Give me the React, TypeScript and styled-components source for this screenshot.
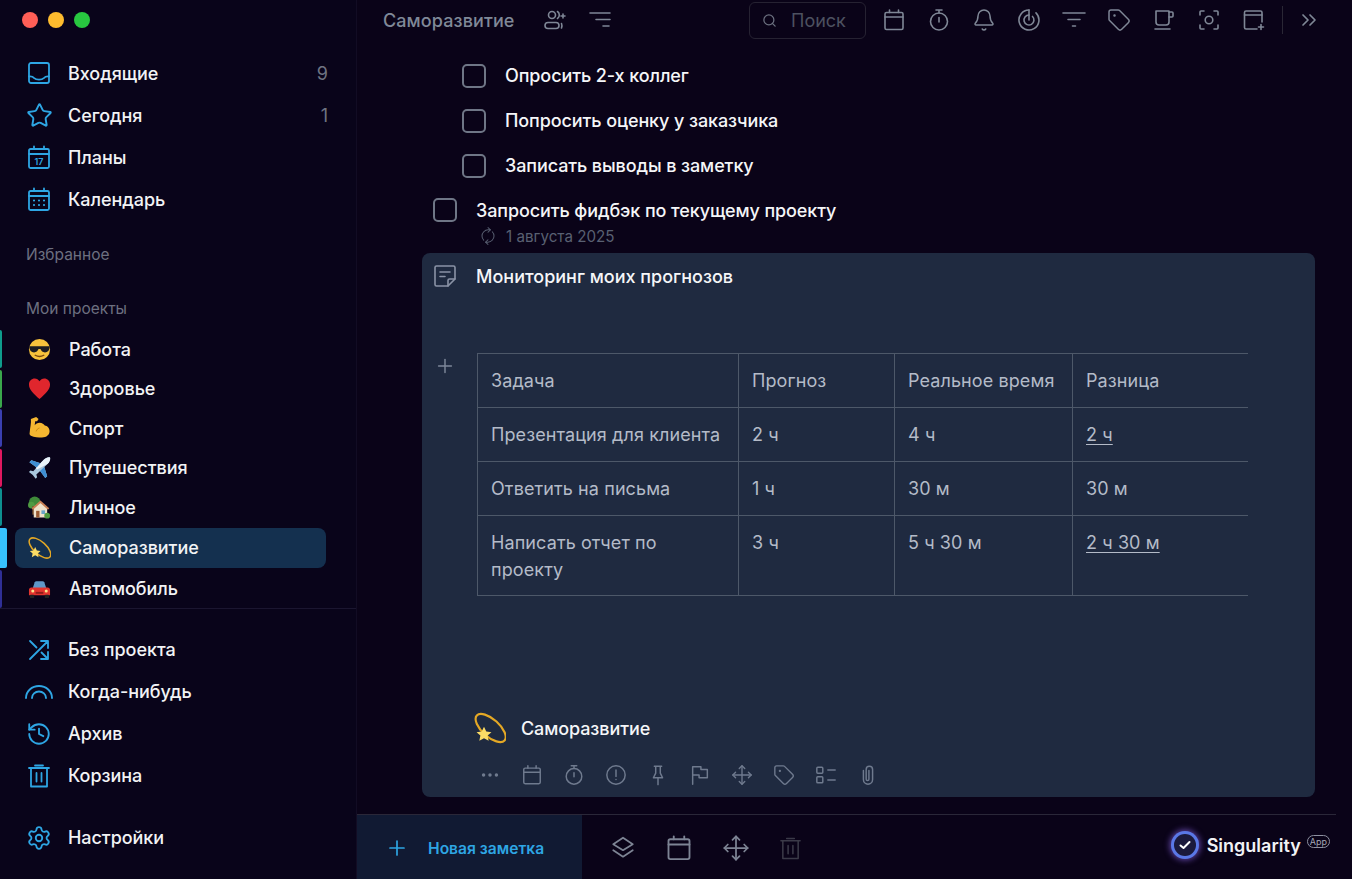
import React from 'react';
import styled, { createGlobalStyle } from 'styled-components';
import {
  Bell,
  ChevronsRight,
  Ellipsis,
  History,
  Move,
  Plus,
  RefreshCw,
  Search,
  Settings,
  Star,
  Tag,
} from 'lucide-react';

const GlobalStyle = createGlobalStyle`
  html, body {
    margin: 0;
    padding: 0;
    height: 100%;
    background: #0a0318;
    font-family: Inter, "Noto Sans", sans-serif;
    overflow: hidden;
  }
  * { box-sizing: border-box; }
`;

type IconProps = { size?: number; stroke?: number };

const Outline = ({ size = 24, stroke = 1.6, children }: IconProps & { children: React.ReactNode }) => (
  <svg width={size} height={size} viewBox='0 0 24 24' fill='none' stroke='currentColor' strokeWidth={stroke} strokeLinecap='round' strokeLinejoin='round'>
    {children}
  </svg>
);

const InboxIcon = (props: IconProps) => (
  <Outline {...props}>
    <rect x='2' y='2' width='20' height='20' rx='2' />
    <path d='M2 15.5c3-.3 4 .3 5.2 1.6 1.2 1.2 2.8 1.5 4.8 1.5s3.6-.3 4.8-1.5c1.2-1.3 2.2-1.9 5.2-1.6' />
  </Outline>
);

const Calendar17Icon = (props: IconProps) => (
  <Outline {...props}>
    <rect x='2' y='4' width='20' height='19' rx='1.5' />
    <path d='M2 9h20M7 1.5V4M17 1.5V4' />
    <text x='12' y='20' textAnchor='middle' fontSize='9' fontWeight='600' fill='currentColor' stroke='none' fontFamily='Inter, sans-serif'>17</text>
  </Outline>
);

const CalendarIcon = (props: IconProps) => (
  <Outline {...props}>
    <rect x='3' y='4.5' width='18' height='17' rx='1.5' />
    <path d='M3 9h18M7.5 2v2.5M16.5 2v2.5' />
  </Outline>
);

const CalendarDotsIcon = (props: IconProps) => (
  <Outline {...props}>
    <rect x='2' y='4' width='20' height='19' rx='1.5' />
    <path d='M2 9h20M7 1.5V4M17 1.5V4' />
    <path d='M7 13.5h.01M12 13.5h.01M17 13.5h.01M7 18h.01M12 18h.01M17 18h.01' strokeWidth={2.2} />
  </Outline>
);

const ShuffleIcon = (props: IconProps) => (
  <Outline {...props}>
    <path d='M3 21 21 3M14 3h7v7M3 3l6.5 6.5M14.5 14.5 21 21M21 14v7h-7' />
  </Outline>
);

const ArcsIcon = () => (
  <svg width='28' height='14' viewBox='0 0 28 14' fill='none' stroke='currentColor' strokeWidth={1.9} strokeLinecap='round'>
    <path d='M1 13a13 12 0 0 1 26 0M7 13a7 6.5 0 0 1 14 0' />
  </svg>
);

const PeopleAddIcon = (props: IconProps) => (
  <Outline {...props}>
    <circle cx='9' cy='7' r='3.5' />
    <rect x='2' y='14.5' width='14' height='6' rx='3' />
    <path d='M14.5 3.5c1.3.8 1.8 2 1.8 3.5s-.5 2.700-1.800 3.500M18.500 15.500c.5 1.200.5 3 0 4.500M20 6v4M18 8h4' />
  </Outline>
);

const SortLinesIcon = (props: IconProps) => (
  <Outline {...props}>
    <path d='M2 5h20M8 11.5h14M15 18h6' />
  </Outline>
);

const TimerIcon = (props: IconProps) => (
  <Outline {...props}>
    <circle cx='12' cy='13.5' r='8.5' />
    <path d='M9 2h6M12 2v3M12 9.5v4.5' />
  </Outline>
);

const RadarIcon = (props: IconProps) => (
  <Outline {...props}>
    <path d='M12 2a10 10 0 1 0 7 2.9' />
    <path d='M12 7a5 5 0 1 0 3.5 1.46' />
    <path d='M12 2v10' />
  </Outline>
);

const FunnelLinesIcon = (props: IconProps) => (
  <Outline {...props}>
    <path d='M1 5h22M6 11.5h12M10.5 18h3' />
  </Outline>
);

const MugIcon = (props: IconProps) => (
  <Outline {...props}>
    <path d='M4 3h13v11a3 3 0 0 1-3 3H7a3 3 0 0 1-3-3z' />
    <path d='M17 4h3a1 1 0 0 1 1 1v3a1 1 0 0 1-1 1h-3M3 21h15' />
  </Outline>
);

const ScanIcon = (props: IconProps) => (
  <Outline {...props}>
    <path d='M3 7V4a1 1 0 0 1 1-1h3M17 3h3a1 1 0 0 1 1 1v3M21 17v3a1 1 0 0 1-1 1h-3M7 21H4a1 1 0 0 1-1-1v-3' />
    <circle cx='12' cy='12' r='3.8' />
  </Outline>
);

const WindowAddIcon = (props: IconProps) => (
  <Outline {...props}>
    <path d='M15 21H4a1.5 1.5 0 0 1-1.5-1.5v-15A1.5 1.5 0 0 1 4 3h14.5A1.5 1.5 0 0 1 20 4.5V14' />
    <path d='M2.5 7H20M19 16.5v5M16.5 19h5' />
  </Outline>
);

const NoteIcon = (props: IconProps) => (
  <Outline {...props}>
    <path d='M15 22H3.5A1.5 1.5 0 0 1 2 20.5v-17A1.5 1.5 0 0 1 3.5 2h17A1.5 1.5 0 0 1 22 3.5V15z' />
    <path d='M22 15h-5.5a1.5 1.5 0 0 0-1.5 1.5V22M7 8h10M7 12.5h5' />
  </Outline>
);

const AlertIcon = (props: IconProps) => (
  <Outline {...props}>
    <circle cx='12' cy='12' r='10' />
    <path d='M12 6.5v7M12 17h.01' />
  </Outline>
);

const PinIcon = (props: IconProps) => (
  <Outline {...props}>
    <path d='M8 2.5h8M9.5 2.5V10L7 15h10l-2.5-5V2.5M12 15v7.5' />
  </Outline>
);

const ChecklistIcon = (props: IconProps) => (
  <Outline {...props}>
    <rect x='2' y='3.5' width='6.5' height='6.5' rx='1' />
    <rect x='2' y='14' width='6.5' height='6.5' rx='1' />
    <path d='M14 6.5h8M14 17.5h8' />
  </Outline>
);

const ClipIcon = (props: IconProps) => (
  <Outline {...props}>
    <path d='M7 7v10a5 5 0 0 0 10 0V6a3.5 3.5 0 0 0-7 0v10.500a1.500 1.500 0 0 0 3 0V7' />
  </Outline>
);

const FlagIcon = (props: IconProps) => (
  <Outline {...props}>
    <path d='M4 22V3h9v3h7v9h-9v-3H4' />
  </Outline>
);

const LayersIcon = (props: IconProps) => (
  <Outline {...props}>
    <path d='M12 2.5 21 8.5 12 14 3 8.5z' />
    <path d='M3 14l9 6 9-6' />
  </Outline>
);

const TrashSquareIcon = (props: IconProps) => (
  <Outline {...props}>
    <path d='M2 4h20M8 1.5h8M4 4v18.5h16V4M9.5 9v8.5M14.5 9v8.5' />
  </Outline>
);

const CoolEmoji = ({ size }: IconProps) => (
  <svg width={size} height={size} viewBox='0 0 24 24'>
    <circle cx='12' cy='12' r='11' fill='#f7c23c' />
    <path d='M1.5 8.5h21V10c0 3-2 5-4.800 5-2.400 0-3.900-1.500-4.700-3.500h-2c-.8 2-2.300 3.500-4.700 3.500C3.500 15 1.500 13 1.500 10z' fill='#1d1d22' />
    <path d='M7.5 18c2.800 1.600 6.200 1.600 9 0' stroke='#7a4a12' strokeWidth='1.4' fill='none' strokeLinecap='round' />
  </svg>
);

const HeartEmoji = ({ size }: IconProps) => (
  <svg width={size} height={size} viewBox='0 0 24 24'>
    <path d='M12 23C6 17.500 1 13.500 1 7.800 1 4 3.800 1.500 7 1.500c2.200 0 3.900 1.100 5 3 1.100-1.900 2.800-3 5-3 3.200 0 6 2.500 6 6.300C23 13.500 18 17.500 12 23z' fill='#e0262d' />
  </svg>
);

const ArmEmoji = ({ size }: IconProps) => (
  <svg width={size} height={size} viewBox='0 0 24 24'>
    <path d='M3 2.5 8.5 0.5l2.500 2-1.500 2.500L7.500 5l-.5 4c1-1.500 3-2.500 5-2.500 3 0 4.500 1.500 5.500 3 2.500.3 5 2.300 5 6 0 3.500-3 6.500-8 6.500-3.500 0-8-.5-11.500-2-1.500-.7-1.500-2-1.200-3.500C2 12 3.500 7 3 2.500z' fill='#f5b731' />
    <path d='M12 12c-2 .5-3 2-3.500 3.500' stroke='#c98510' strokeWidth='1' fill='none' />
  </svg>
);

const PlaneEmoji = ({ size }: IconProps) => (
  <svg width={size} height={size} viewBox='0 0 24 24'>
    <path d='M23 1c-2-.6-4.500.4-6.500 2.400L13 7 3.500 4 1.500 6l7.500 5.500-3.500 4-3-.8-1.500 1.500 4 3 3 4 1.500-1.500-.8-3 4-3.500L18 22.500l2-2-3-9.500 3.600-3.500C22.600 5.500 23.600 3 23 1z' fill='#a9c7dd' />
    <path d='M23 1c-2-.6-4.500.4-6.500 2.400L8 12l1.500 1.500L20.600 7.500C22.600 5.500 23.600 3 23 1z' fill='#eaf3f9' />
    <path d='M13 7 3.500 4 1.500 6 9 11.500zM17 11l3 9.500-2 2-5.500-7.500z' fill='#3f8fd2' />
  </svg>
);

const HouseEmoji = ({ size }: IconProps) => (
  <svg width={size} height={size} viewBox='0 0 24 24'>
    <circle cx='7' cy='7' r='6' fill='#3f8a3a' />
    <circle cx='3.5' cy='10' r='3.5' fill='#4f9b42' />
    <rect x='4.5' y='11' width='2' height='9' fill='#7a4f2a' />
    <path d='M6 23V13l7-6 7 6v10z' fill='#efe2cb' />
    <path d='M4.5 14 13 6.5l8.500 7.500' stroke='#c98055' strokeWidth='2' fill='none' />
    <rect x='8.5' y='16' width='3.5' height='7' fill='#9a5a32' />
    <rect x='14' y='15.5' width='3.8' height='3.8' fill='#6aa6c9' />
    <circle cx='20' cy='21' r='3' fill='#4f9b42' />
  </svg>
);

const DizzyEmoji = ({ size }: IconProps) => (
  <svg width={size} height={size} viewBox='0 0 24 24'>
    <ellipse cx='12.5' cy='12' rx='14' ry='6.5' transform='rotate(42 12.5 12)' fill='none' stroke='#e4a825' strokeWidth='1.6' />
    <path d='M7.5 11l1.700 3.600 3.900.5-2.900 2.600.8 3.900-3.500-2-3.500 2 .8-3.900-2.900-2.600 3.900-.5z' fill='#fbdc66' />
  </svg>
);

const CarEmoji = ({ size }: IconProps) => (
  <svg width={size} height={size} viewBox='0 0 24 24'>
    <path d='M5 11l2-6c.3-.8 1-1.200 1.800-1.200h6.400c.8 0 1.500.4 1.800 1.200l2 6z' fill='#5f98c8' />
    <path d='M1 13c0-1.500 1-2.500 2.500-2.500h17c1.500 0 2.500 1 2.500 2.500v5.500H1z' fill='#e2342e' />
    <rect x='2' y='18' width='4.5' height='3.5' rx='1' fill='#222' />
    <rect x='17.5' y='18' width='4.5' height='3.5' rx='1' fill='#222' />
    <circle cx='5' cy='14' r='1.6' fill='#fbe38a' />
    <circle cx='19' cy='14' r='1.6' fill='#fbe38a' />
    <rect x='8' y='15' width='8' height='2' fill='#8f1d1a' />
  </svg>
);

const primaryNav = [
  { label: 'Входящие', icon: <InboxIcon size={24} stroke={1.8} />, count: '9' },
  { label: 'Сегодня', icon: <Star size={27} strokeWidth={1.7} />, count: '1' },
  { label: 'Планы', icon: <Calendar17Icon size={24} stroke={1.8} /> },
  { label: 'Календарь', icon: <CalendarDotsIcon size={24} stroke={1.8} /> },
];

const projects = [
  { label: 'Работа', emoji: <CoolEmoji size={23} />, color: '#0f9c8c' },
  { label: 'Здоровье', emoji: <HeartEmoji size={23} />, color: '#3aa84c' },
  { label: 'Спорт', emoji: <ArmEmoji size={24} />, color: '#3a3fb0' },
  { label: 'Путешествия', emoji: <PlaneEmoji size={24} />, color: '#e0185f' },
  { label: 'Личное', emoji: <HouseEmoji size={24} />, color: '#0e8f8f' },
  { label: 'Саморазвитие', emoji: <DizzyEmoji size={24} />, color: '#37c2ff', active: true },
  { label: 'Автомобиль', emoji: <CarEmoji size={24} />, color: '#2f2f95' },
];

const secondaryNav = [
  { label: 'Без проекта', icon: <ShuffleIcon size={24} stroke={1.8} /> },
  { label: 'Когда-нибудь', icon: <ArcsIcon /> },
  { label: 'Архив', icon: <History size={26} strokeWidth={1.7} /> },
  { label: 'Корзина', icon: <TrashSquareIcon size={24} stroke={1.8} /> },
];

const headerTools = [
  <CalendarIcon key='calendar' />,
  <TimerIcon key='timer' />,
  <Bell key='bell' size={24} strokeWidth={1.5} />,
  <RadarIcon key='radar' />,
  <FunnelLinesIcon key='funnel' />,
  <Tag key='tag' size={24} strokeWidth={1.5} />,
  <MugIcon key='mug' />,
  <ScanIcon key='scan' />,
  <WindowAddIcon key='window' />,
];

const subTasks = ['Опросить 2-х коллег', 'Попросить оценку у заказчика', 'Записать выводы в заметку'];

const tableRows = [
  ['Задача', 'Прогноз', 'Реальное время', 'Разница'],
  ['Презентация для клиента', '2 ч', '4 ч', '2 ч'],
  ['Ответить на письма', '1 ч', '30 м', '30 м'],
  ['Написать отчет по проекту', '3 ч', '5 ч 30 м', '2 ч 30 м'],
];

const underlined = ['2 ч', '2 ч 30 м'];

const cardTools = [
  <Ellipsis key='more' size={22} strokeWidth={1.8} />,
  <CalendarIcon key='calendar' size={22} />,
  <TimerIcon key='timer' size={22} />,
  <AlertIcon key='alert' size={22} />,
  <PinIcon key='pin' size={22} />,
  <FlagIcon key='flag' size={22} />,
  <Move key='move' size={22} strokeWidth={1.5} />,
  <Tag key='tag' size={22} strokeWidth={1.5} />,
  <ChecklistIcon key='checklist' size={22} />,
  <ClipIcon key='clip' size={22} />,
];

const App = () => (
  <Page>
    <GlobalStyle />
    <Sidebar>
      <TrafficLights>
        <Light $color='#ff5f57' />
        <Light $color='#febc2e' />
        <Light $color='#28c840' />
      </TrafficLights>

      <NavList $top={24}>
        {primaryNav.map((item) => (
          <NavRow key={item.label}>
            <NavIcon>{item.icon}</NavIcon>
            <NavLabel>{item.label}</NavLabel>
            {item.count && <Count>{item.count}</Count>}
          </NavRow>
        ))}
      </NavList>

      <SectionLabel $top={25}>Избранное</SectionLabel>
      <SectionLabel $top={34}>Мои проекты</SectionLabel>

      <ProjectList>
        {projects.map((project) => (
          <ProjectRow key={project.label} $active={project.active}>
            <Strip $color={project.color} $active={project.active} />
            <ProjectPill $active={project.active}>
              <EmojiSlot>{project.emoji}</EmojiSlot>
              <NavLabel>{project.label}</NavLabel>
            </ProjectPill>
          </ProjectRow>
        ))}
      </ProjectList>

      <SidebarDivider />

      <NavList $top={20}>
        {secondaryNav.map((item) => (
          <NavRow key={item.label}>
            <NavIcon>{item.icon}</NavIcon>
            <NavLabel>{item.label}</NavLabel>
          </NavRow>
        ))}
      </NavList>

      <NavList $top={20}>
        <NavRow>
          <NavIcon>
            <Settings size={26} strokeWidth={1.7} />
          </NavIcon>
          <NavLabel>Настройки</NavLabel>
        </NavRow>
      </NavList>
    </Sidebar>

    <Main>
      <Header>
        <HeaderTitle>Саморазвитие</HeaderTitle>
        <HeaderIcons>
          <PeopleAddIcon />
          <SortLinesIcon />
        </HeaderIcons>
        <SearchBox>
          <Search size={15} strokeWidth={2} />
          <SearchText>Поиск</SearchText>
        </SearchBox>
        <ToolGroup>{headerTools}</ToolGroup>
        <HeaderDivider />
        <Collapse>
          <ChevronsRight size={24} strokeWidth={1.7} />
        </Collapse>
      </Header>

      <Content>
        {subTasks.map((task) => (
          <SubTaskRow key={task}>
            <Checkbox />
            <TaskTitle>{task}</TaskTitle>
          </SubTaskRow>
        ))}

        <TaskBlock>
          <TaskHead>
            <Checkbox />
            <TaskTitle>Запросить фидбэк по текущему проекту</TaskTitle>
          </TaskHead>
          <TaskDate>
            <RepeatGlyph>
              <RefreshCw size={16} strokeWidth={1.5} />
            </RepeatGlyph>
            <span>1 августа 2025</span>
          </TaskDate>
        </TaskBlock>

        <NoteCard>
          <NoteHead>
            <NoteIconSlot>
              <NoteIcon size={24} />
            </NoteIconSlot>
            <NoteTitle>Мониторинг моих прогнозов</NoteTitle>
          </NoteHead>

          <TableArea>
            <PlusHandle>
              <Plus size={22} strokeWidth={1.6} />
            </PlusHandle>
            <NoteTable>
              <colgroup>
                <col width={261} />
                <col width={156} />
                <col width={178} />
                <col width={175} />
              </colgroup>
              <tbody>
                {tableRows.map((row, rowIndex) => (
                  <tr key={row[0]}>
                    {row.map((cell, cellIndex) => (
                      <Cell key={cellIndex}>
                        {rowIndex > 0 && cellIndex === 3 && underlined.includes(cell) ? <CellLink>{cell}</CellLink> : cell}
                      </Cell>
                    ))}
                  </tr>
                ))}
              </tbody>
            </NoteTable>
          </TableArea>

          <NoteProject>
            <DizzyEmoji size={32} />
            <TaskTitle>Саморазвитие</TaskTitle>
          </NoteProject>

          <CardTools>{cardTools}</CardTools>
        </NoteCard>
      </Content>

      <BottomDivider />

      <BottomBar>
        <NewNote>
          <Plus size={24} strokeWidth={1.7} />
          <NewNoteLabel>Новая заметка</NewNoteLabel>
        </NewNote>
        <BottomTools>
          <LayersIcon size={26} />
          <CalendarIcon size={28} />
          <Move size={28} strokeWidth={1.5} />
          <DimIcon>
            <TrashSquareIcon size={23} />
          </DimIcon>
        </BottomTools>
        <Brand>
          <BrandMark>
            <svg width='12' height='10' viewBox='0 0 12 10' fill='none' stroke='#ffffff' strokeWidth='2' strokeLinecap='round' strokeLinejoin='round'>
              <path d='M1.5 5.5 4.5 8l6-6' />
            </svg>
          </BrandMark>
          <BrandName>Singularity</BrandName>
          <BrandTag>App</BrandTag>
        </Brand>
      </BottomBar>
    </Main>
  </Page>
);

export default App;

const Page = styled.div`
  display: grid;
  grid-template-columns: 357px 1fr;
  width: 1352px;
  height: 879px;
  background: #0a0318;
  color: #ffffff;
  overflow: hidden;
`;

const Sidebar = styled.aside`
  display: flex;
  flex-direction: column;
  background: #09041a;
  border-right: 1px solid #120c24;
`;

const TrafficLights = styled.div`
  display: flex;
  gap: 10px;
  padding: 12px 0 0 22px;
`;

const Light = styled.span<{ $color: string }>`
  width: 16px;
  height: 16px;
  border-radius: 50%;
  background: ${({ $color }) => $color};
`;

const NavList = styled.div<{ $top: number }>`
  display: flex;
  flex-direction: column;
  margin-top: ${({ $top }) => $top}px;
`;

const NavRow = styled.div`
  display: flex;
  align-items: center;
  height: 42px;
  padding-right: 28px;
`;

const NavIcon = styled.span`
  display: flex;
  justify-content: center;
  width: 46px;
  margin: 0 6px 0 16px;
  color: #2ea6e4;
`;

const NavLabel = styled.span`
  font-size: 18px;
  font-weight: 500;
  color: #f2f3f5;
  letter-spacing: -0.05px;
`;

const Count = styled.span`
  margin-left: auto;
  font-size: 18px;
  color: #6f7482;
`;

const SectionLabel = styled.div<{ $top: number }>`
  margin-top: ${({ $top }) => $top}px;
  padding-left: 26px;
  font-size: 15.5px;
  line-height: 20px;
  color: #6d7080;
`;

const ProjectList = styled.div`
  display: flex;
  flex-direction: column;
  gap: 1.6px;
  margin-top: 11px;
`;

const ProjectRow = styled.div<{ $active?: boolean }>`
  display: flex;
  height: ${({ $active }) => ($active ? 40 : 38)}px;
`;

const Strip = styled.span<{ $color: string; $active?: boolean }>`
  flex: 0 0 ${({ $active }) => ($active ? 7 : 2)}px;
  background: ${({ $color }) => $color};
  border-radius: 0 2px 2px 0;
`;

const ProjectPill = styled.div<{ $active?: boolean }>`
  display: flex;
  align-items: center;
  width: 311px;
  margin-left: ${({ $active }) => ($active ? 8 : 13)}px;
  padding-left: 13px;
  border-radius: 8px;
  background: ${({ $active }) => ($active ? '#14304f' : 'transparent')};
`;

const EmojiSlot = styled.span`
  display: flex;
  justify-content: center;
  width: 23px;
  margin-right: 18px;
`;

const SidebarDivider = styled.div`
  height: 1px;
  background: #1b1630;
`;

const Main = styled.main`
  display: flex;
  flex-direction: column;
  min-width: 0;
`;

const Header = styled.header`
  display: flex;
  flex: 0 0 40px;
  align-items: center;
  padding: 0 31px 0 26px;
  color: #7f8796;
`;

const HeaderTitle = styled.span`
  font-size: 18px;
  font-weight: 500;
  color: #808998;
  letter-spacing: 0.1px;
`;

const HeaderIcons = styled.div`
  display: flex;
  gap: 21px;
  margin-left: 28px;
`;

const SearchBox = styled.div`
  display: flex;
  align-items: center;
  gap: 14px;
  width: 117px;
  height: 37px;
  margin-left: auto;
  padding-left: 12px;
  border: 1px solid #262232;
  border-radius: 6px;
  color: #6c7180;
`;

const SearchText = styled.span`
  font-size: 18px;
  color: #4d5160;
`;

const ToolGroup = styled.div`
  display: flex;
  align-items: center;
  gap: 21px;
  margin-left: 16px;
`;

const HeaderDivider = styled.span`
  width: 1px;
  height: 28px;
  margin: 0 14px 0 16px;
  background: #2a2735;
`;

const Collapse = styled.span`
  display: flex;
`;

const Content = styled.div`
  flex: 1;
  min-height: 0;
  padding-top: 13px;
`;

const SubTaskRow = styled.div`
  display: flex;
  align-items: center;
  gap: 19px;
  height: 45px;
  padding-left: 105px;
`;

const Checkbox = styled.span`
  flex: 0 0 24px;
  height: 24px;
  border: 2px solid #6f7686;
  border-radius: 5px;
`;

const TaskTitle = styled.span`
  font-size: 18px;
  font-weight: 500;
  color: #f5f6f8;
  letter-spacing: -0.1px;
`;

const NoteTitle = styled(TaskTitle)`
  letter-spacing: 0;
`;

const TaskBlock = styled.div`
  display: flex;
  flex-direction: column;
  height: 65px;
  padding: 10px 0 0 76px;
`;

const TaskHead = styled.div`
  display: flex;
  align-items: center;
  gap: 19px;
  height: 24px;
`;

const TaskDate = styled.div`
  display: flex;
  align-items: center;
  gap: 10px;
  height: 24px;
  margin: 2px 0 0 47px;
  font-size: 15.2px;
  color: #596072;
`;

const RepeatGlyph = styled.span`
  display: flex;
  transform: rotate(-45deg);
`;

const NoteCard = styled.section`
  display: flex;
  flex-direction: column;
  width: 893px;
  height: 544px;
  margin-left: 65px;
  border-radius: 8px;
  background: #1f2a40;
`;

const NoteHead = styled.div`
  display: flex;
  align-items: center;
  gap: 19px;
  height: 24px;
  margin-top: 11px;
  padding-left: 11px;
`;

const NoteIconSlot = styled.span`
  display: flex;
  color: #8a93a6;
`;

const TableArea = styled.div`
  display: flex;
  margin-top: 65px;
`;

const PlusHandle = styled.span`
  display: flex;
  justify-content: center;
  width: 55px;
  padding: 2px 9px 0 0;
  color: #7d8799;
`;

const NoteTable = styled.table`
  width: 770px;
  table-layout: fixed;
  border-collapse: collapse;
  border-top: 1px solid #4d5869;
  border-left: 1px solid #4d5869;
`;

const Cell = styled.td`
  height: 54px;
  padding: 13px 13px 12px;
  border-right: 1px solid #4d5869;
  border-bottom: 1px solid #4d5869;
  font-size: 18px;
  line-height: 27px;
  color: #b4bbc8;
  vertical-align: top;
  letter-spacing: 0.1px;

  &:last-child {
    border-right: none;
  }
`;

const CellLink = styled.span`
  text-decoration: underline;
  text-underline-offset: 3px;
`;

const NoteProject = styled.div`
  display: flex;
  align-items: center;
  gap: 15px;
  margin-top: auto;
  padding-left: 52px;
`;

const CardTools = styled.div`
  display: flex;
  align-items: center;
  gap: 20px;
  height: 44px;
  margin-top: 9px;
  padding-left: 57px;
  color: #6f7a8e;
`;

const BottomDivider = styled.div`
  height: 1px;
  margin-right: 16px;
  background: #2a2738;
`;

const BottomBar = styled.footer`
  display: flex;
  flex: 0 0 64px;
  align-items: center;
`;

const NewNote = styled.div`
  display: flex;
  align-items: center;
  gap: 19px;
  align-self: stretch;
  width: 225px;
  padding: 2px 0 0 28px;
  background: #111a33;
  color: #2ea6e4;
`;

const NewNoteLabel = styled.span`
  font-size: 15.6px;
  font-weight: 600;
`;

const BottomTools = styled.div`
  display: flex;
  align-items: center;
  gap: 29px;
  margin: 2px 0 0 28px;
  color: #7d8494;
`;

const DimIcon = styled.span`
  display: flex;
  color: #3b3a48;
`;

const Brand = styled.div`
  display: flex;
  align-items: center;
  margin-left: auto;
  padding: 0 22px 4px 0;
`;

const BrandMark = styled.span`
  display: flex;
  align-items: center;
  justify-content: center;
  width: 22px;
  height: 22px;
  border-radius: 50%;
  background: #1b1a3c;
  box-shadow: 0 0 0 3px #5a78e6, 0 0 6px 4px rgba(132, 96, 224, 0.75);
`;

const BrandName = styled.span`
  margin-left: 11px;
  font-size: 18px;
  font-weight: 600;
  color: #f1f2f5;
`;

const BrandTag = styled.span`
  margin: -7px 0 0 6px;
  padding: 0 2px;
  border: 1px solid #8d90a0;
  border-radius: 7px;
  font-size: 9px;
  line-height: 11px;
  color: #a5a8b5;
`;
